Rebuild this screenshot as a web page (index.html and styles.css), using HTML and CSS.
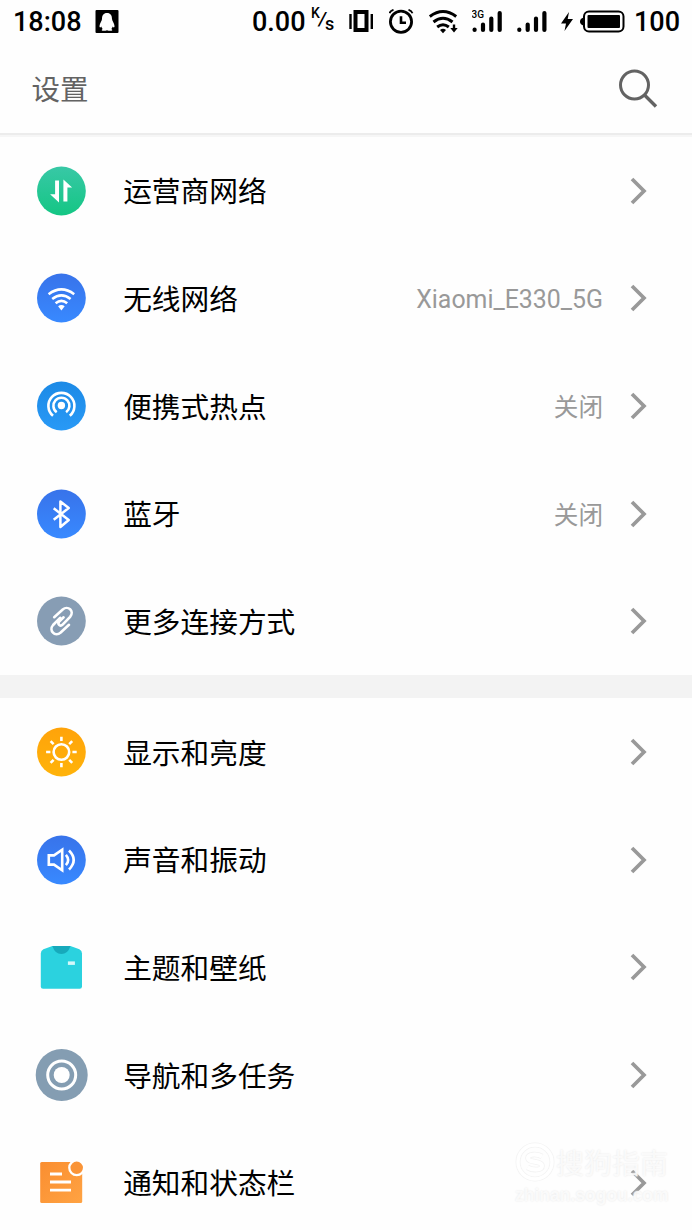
FILE: index.html
```html
<!DOCTYPE html>
<html lang="zh-CN">
<head>
<meta charset="UTF-8" />
<meta name="viewport" content="width=device-width, initial-scale=1" />
<title>设置</title>
<link rel="stylesheet" href="styles.css">
</head>
<body>

<!-- Shared gradients and the row arrow -->
<svg class="defs" width="0" height="0">
  <defs>
    <linearGradient id="green" x1="0" y1="0" x2="0" y2="1"><stop offset="0" stop-color="#38c8a6" /><stop offset="1" stop-color="#14c684" /></linearGradient>
    <linearGradient id="blue" x1="0" y1="0" x2="0" y2="1"><stop offset="0" stop-color="#3873ea" /><stop offset="1" stop-color="#3889ff" /></linearGradient>
    <linearGradient id="sky" x1="0" y1="0" x2="0" y2="1"><stop offset="0" stop-color="#1c8ae6" /><stop offset="1" stop-color="#2899f6" /></linearGradient>
    <linearGradient id="orange" x1="0" y1="0" x2="1" y2="1"><stop offset="0" stop-color="#fa8e30" /><stop offset="1" stop-color="#ffa343" /></linearGradient>
    <linearGradient id="amber" x1="0" y1="0" x2="0" y2="1"><stop offset="0" stop-color="#ffa30a" /><stop offset="1" stop-color="#ffb30a" /></linearGradient>
    <symbol id="arrow" viewBox="0 0 18 28"><path d="M2 2 L14 14 L2 26" fill="none" stroke="#999" stroke-width="3.7" /></symbol>
  </defs>
</svg>

<header>
  <div class="status-bar">
    <span class="time">18:08</span>
    <svg class="qq" width="24" height="24" viewBox="0 0 24 24">
      <rect x=".5" y="0" width="23" height="23" rx="1" />
      <path fill="#fff" d="M12 3 C8.500 3 7 5.500 7 9 C7 11 4.500 13.500 4.500 16 C4.500 18 5.500 17.500 6.300 16.500 C6.500 17.500 7 18.300 7.700 18.900 C6.500 19.300 6.300 20.700 7.700 20.700 L10.500 20.700 Q12 19.700 13.500 20.700 L16.300 20.700 C17.700 20.700 17.500 19.300 16.300 18.900 C17 18.300 17.500 17.500 17.700 16.500 C18.500 17.500 19.500 18 19.500 16 C19.500 13.500 17 11 17 9 C17 5.500 15.500 3 12 3Z" />
    </svg>
    <span class="speed">0.00</span>
    <span class="unit"><sup>K</sup><i>/</i><sub>s</sub></span>
    <svg class="vibrate" width="26" height="26" viewBox="0 0 26 26">
      <path d="M6.500 3 H17.500 V21 H6.500Z" fill="none" stroke="#000" stroke-width="4" />
      <path d="M1.500 5 V20 M22.800 5 V20" stroke="#000" stroke-width="2.400" />
    </svg>
    <svg class="alarm" width="26" height="26" viewBox="0 0 26 26" fill="none" stroke="#000">
      <circle cx="12" cy="12.700" r="10.600" stroke-width="2.800" />
      <path d="M12 7.300 V13.800 H17" stroke-width="2.600" />
      <path d="M.5 4.200 Q1.500 1.500 4.500 .8 M23.500 4.200 Q22.500 1.500 19.500 .8" stroke-width="1.800" />
    </svg>
    <svg class="wifi" width="31" height="26" viewBox="0 0 31 26" fill="none" stroke="#000" stroke-width="3">
      <path d="M.8 7.500 Q14 -2.500 27.200 7.500 M4.500 13 Q14 5.500 23.500 13 M8.200 18 Q14 13.500 19.800 18" />
      <path d="M11 21 Q14 18.500 17 21 L14 24.300Z" fill="#000" stroke="none" />
      <path d="M25 15.500 V20" stroke-width="2.400" /><path d="M21.300 19 H28.700 L25 23.500Z" fill="#000" stroke="none" />
    </svg>
    <svg class="signal" width="32" height="26" viewBox="0 0 32 26" stroke="#000" stroke-width="4.200" stroke-linecap="round">
      <text class="gen" x="-.5" y="8.500">3G</text>
      <path d="M2.600 20.500 V21 M11 15.500 V21 M19.300 9.500 V21 M27.700 4 V21" />
    </svg>
    <svg class="signal" width="32" height="26" viewBox="0 0 32 26" stroke="#000" stroke-width="4.200" stroke-linecap="round">
      <path d="M2.300 20.500 V21 M10.700 15.500 V21 M19 9.500 V21 M27.400 4 V21" />
    </svg>
    <svg class="bolt" width="14" height="20" viewBox="0 0 14 20"><path d="M9 0 L1 11.500 H6 L4.500 19 L13 7 H7.700Z" /></svg>
    <svg class="battery" width="45" height="24" viewBox="0 0 45 24">
      <rect x="4" y="1.500" width="39.500" height="20" rx="5" fill="none" stroke="#000" stroke-width="2" />
      <rect x="7.500" y="5" width="32.500" height="13" rx="1" />
      <path d="M3.500 7.500 Q0 8.500 0 11.500 Q0 14.600 3.500 15.600Z" />
    </svg>
    <span class="level">100</span>
  </div>
  <div class="title-bar">
    <h1>设置</h1>
    <svg class="search" width="42" height="42" viewBox="0 0 42 42" fill="none" stroke="#636363" stroke-width="3">
      <circle cx="16.500" cy="17" r="14" /><path d="M26.500 27 L38 38.500" stroke-width="3.400" />
    </svg>
  </div>
</header>

<main>
  <section class="group">
    <a class="row">
      <svg class="icon" viewBox="-.4 0 56 56"><circle cx="28" cy="28" r="24.400" fill="url(#green)" />
        <path fill="#fff" d="M21.700 17.500 H25.600 V39.500 L16.700 31.300 H21.700Z M30 16.500 L38.700 24.500 H34 V38.500 H30Z" /></svg>
      <span class="label">运营商网络</span>
      <svg class="arrow"><use href="#arrow" /></svg>
    </a>
    <a class="row">
      <svg class="icon" viewBox="-.4 0 56 56"><circle cx="28" cy="28" r="24.400" fill="url(#blue)" />
        <path fill="none" stroke="#fff" stroke-width="2.600" d="M15.200 24.200 Q28 14.600 40.800 24.200 M18.800 28.900 Q28 21.700 37.200 28.900 M22.200 33.200 Q28 28.600 33.800 33.200" />
        <path fill="#fff" d="M24.700 36.300 Q28 33.600 31.300 36.300 L28 40.500Z" /></svg>
      <span class="label">无线网络</span>
      <span class="value ssid">Xiaomi_E330_5G</span>
      <svg class="arrow"><use href="#arrow" /></svg>
    </a>
    <a class="row">
      <svg class="icon" viewBox="-.4 0 56 56"><circle cx="28" cy="28" r="24.400" fill="url(#sky)" />
        <circle cx="28" cy="27.500" r="3.700" fill="#fff" />
        <path fill="none" stroke="#fff" stroke-width="2.600" d="M19.600 37.800 A13 13 0 1 1 36.400 37.800 M23.300 34.200 A8 8 0 1 1 32.700 34.200" /></svg>
      <span class="label">便携式热点</span>
      <span class="value">关闭</span>
      <svg class="arrow"><use href="#arrow" /></svg>
    </a>
    <a class="row">
      <svg class="icon" viewBox="-.4 0 56 56"><circle cx="28" cy="28" r="24.400" fill="url(#blue)" />
        <path fill="none" stroke="#fff" stroke-width="2.500" stroke-linejoin="round" d="M20.300 22.300 L35.300 34 L27 41 V15.500 L35.300 22 L20.300 33.700" /></svg>
      <span class="label">蓝牙</span>
      <span class="value">关闭</span>
      <svg class="arrow"><use href="#arrow" /></svg>
    </a>
    <a class="row">
      <svg class="icon" viewBox="-.4 0 56 56"><circle cx="28" cy="28" r="24.400" fill="#879db4" />
        <path fill="none" stroke="#fff" stroke-width="2.600" stroke-linecap="round" d="M20.800 24.200 L29.300 16.500 C34.500 12 41.500 18 36.700 23.800 L29.200 31.700 C27 34 23.600 31.200 25.800 28.600 L30.200 24.300 M26.700 24.800 L19.700 32 C15 37.500 21.500 44.500 27.300 39.500 L35.600 31.800" /></svg>
      <span class="label">更多连接方式</span>
      <svg class="arrow"><use href="#arrow" /></svg>
    </a>
  </section>

  <section class="group">
    <a class="row">
      <svg class="icon" viewBox="-.4 0 56 56"><circle cx="28" cy="28" r="24.400" fill="url(#amber)" />
        <g fill="none" stroke="#fff" stroke-width="2.600"><circle cx="28" cy="28" r="7.800" />
        <path d="M28 12.700 V17 M28 39 V43.300 M12.700 28 H17 M39 28 H43.300 M17.200 17.200 L20.200 20.200 M35.800 35.800 L38.800 38.800 M17.200 38.800 L20.200 35.800 M35.800 20.200 L38.800 17.200" /></g></svg>
      <span class="label">显示和亮度</span>
      <svg class="arrow"><use href="#arrow" /></svg>
    </a>
    <a class="row">
      <svg class="icon" viewBox="-.4 0 56 56"><circle cx="28" cy="28" r="24.400" fill="url(#blue)" />
        <path fill="none" stroke="#fff" stroke-width="2.600" d="M15.400 23.400 H20.600 L28.800 17.800 V38.200 L20.600 32.600 H15.400Z M32.500 22.800 Q37 28 32.500 33.200 M35.600 18.500 Q45 28 35.600 37.500" /></svg>
      <span class="label">声音和振动</span>
      <svg class="arrow"><use href="#arrow" /></svg>
    </a>
    <a class="row">
      <svg class="icon" viewBox="-.4 0 56 56">
        <path fill="#2bd2df" d="M19 7 H37 L46 10.200 Q48.600 11.400 48.600 14.400 V47.400 Q48.600 49.700 46.300 49.700 H9.700 Q7.400 49.700 7.400 47.400 V14.400 Q7.400 11.400 10 10.200Z" />
        <path fill="#17a9bb" d="M19 7 H37 Q34.500 15 28 15 Q21.500 15 19 7Z" />
        <rect x="34.500" y="22.400" width="7" height="3.500" fill="#d5f8fa" /></svg>
      <span class="label">主题和壁纸</span>
      <svg class="arrow"><use href="#arrow" /></svg>
    </a>
    <a class="row">
      <svg class="icon" viewBox="-.4 0 56 56"><circle cx="28.300" cy="28" r="26" fill="#849db2" />
        <circle cx="28.300" cy="28" r="14" fill="none" stroke="#fff" stroke-width="3" /><circle cx="28.300" cy="28" r="8" fill="#fff" /></svg>
      <span class="label">导航和多任务</span>
      <svg class="arrow"><use href="#arrow" /></svg>
    </a>
    <a class="row">
      <svg class="icon" viewBox="-.4 0 56 56">
        <rect x="6.800" y="7" width="42" height="41" rx="1.500" fill="url(#orange)" />
        <path stroke="#fff" stroke-width="2.800" d="M16.600 19 H28.600 M16.600 27 H37.600 M16.600 35.100 H37.600" />
        <circle cx="43.300" cy="12.800" r="7.400" fill="#fa9437" stroke="#fff" stroke-width="2.300" /></svg>
      <span class="label">通知和状态栏</span>
      <svg class="arrow"><use href="#arrow" /></svg>
    </a>
  </section>
</main>

<div class="watermark">
  <div class="brand">
    <svg width="40" height="40" viewBox="0 0 40 40" fill="none">
      <circle cx="20" cy="20" r="17" stroke="#f3f3f3" stroke-width="5" /><circle cx="20" cy="20" r="17" stroke="#fff" stroke-width="3.400" />
      <path d="M27 14.500 C22 11.500 13 12 13 16 C13 21 27 18.500 27 24 C27 28.500 17.500 28.500 12.500 25.500" stroke="#f3f3f3" stroke-width="5.600" />
      <path d="M27 14.500 C22 11.500 13 12 13 16 C13 21 27 18.500 27 24 C27 28.500 17.500 28.500 12.500 25.500" stroke="#fff" stroke-width="4" />
    </svg>
    <span>搜狗指南</span>
  </div>
  <div class="site">zhinan.sogou.com</div>
</div>

</body>
</html>
```
FILE: styles.css
```css
body {
  margin: 0;
  height: 1230px;
  position: relative;
  overflow: hidden;
  background: #fefefe;
  color: #000;
  font-family: Roboto, "Noto Sans CJK SC", sans-serif;
}
.defs { display: block; }

/* Status bar */
.status-bar {
  display: flex;
  align-items: center;
  height: 43px;
  padding-left: 13px;
  font-size: 27px;
  font-weight: 500;
  white-space: nowrap;
}
.status-bar svg, .status-bar span { flex: none; }
.time { width: 82px; }
.qq { margin-right: 133px; }
.speed { width: 59px; }
.unit {
  display: flex;
  width: 38px;
  line-height: 24px;
}
.unit sup, .unit sub, .unit i {
  line-height: 24px;
  vertical-align: baseline;
}
.unit sup { margin-top: -6px; font-size: 14px; }
.unit i { font-size: 19px; font-weight: 500; margin-left: -1px; }
.unit sub { margin-top: 5px; font-size: 18px; margin-left: -1px; }
.vibrate { margin-right: 14px; }
.alarm { margin-right: 14px; }
.wifi { margin-right: 12px; }
.signal { margin-right: 13px; }
.gen {
  font: 500 10px Roboto, sans-serif;
  stroke: none;
}
.bolt { margin: 0 6px 0 -2px; }
.battery { margin-right: 8px; }
.level { padding-left: 1px; }

/* Title bar */
.title-bar {
  display: flex;
  align-items: center;
  justify-content: space-between;
  height: 90px;
  padding: 0 32px 0 31.5px;
  border-bottom: 2px solid #ececec;
  box-shadow: 0 2px 0 #f6f6f6;
}
h1 {
  margin: 0;
  padding-bottom: 1px;
  font-size: 28.5px;
  font-weight: 400;
  color: #636363;
}
.search { margin-top: 2px; }

/* Settings list */
main { padding-top: 1.7px; }
.group + .group { border-top: 23px solid #f3f3f3; }
.row {
  display: flex;
  align-items: center;
  height: 107.7px;
  padding: 0 44px 0 33px;
}
.icon {
  width: 56px;
  height: 56px;
  margin-right: 34.2px;
}
.label {
  flex: 1;
  padding-bottom: 1.6px;
  font-size: 28.7px;
}
.value {
  padding-bottom: 1.6px;
  font-size: 24.6px;
  color: #999;
}
.ssid {
  padding: 2px 0 0;
  font-size: 24.9px;
}
.arrow {
  width: 18px;
  height: 28px;
  margin-left: 27px;
}

/* Watermark */
.watermark {
  position: absolute;
  left: 515px;
  top: 1142px;
  width: 160px;
  color: rgba(255, 255, 255, 0.75);
  text-shadow: 0 0 2px #e6e6e6;
}
.brand {
  display: flex;
  align-items: center;
  height: 40px;
  font-size: 28px;
  gap: 1px;
}
.site {
  margin-top: 3px;
  font: bold 17.5px/20px "Liberation Sans", sans-serif;
}
```
